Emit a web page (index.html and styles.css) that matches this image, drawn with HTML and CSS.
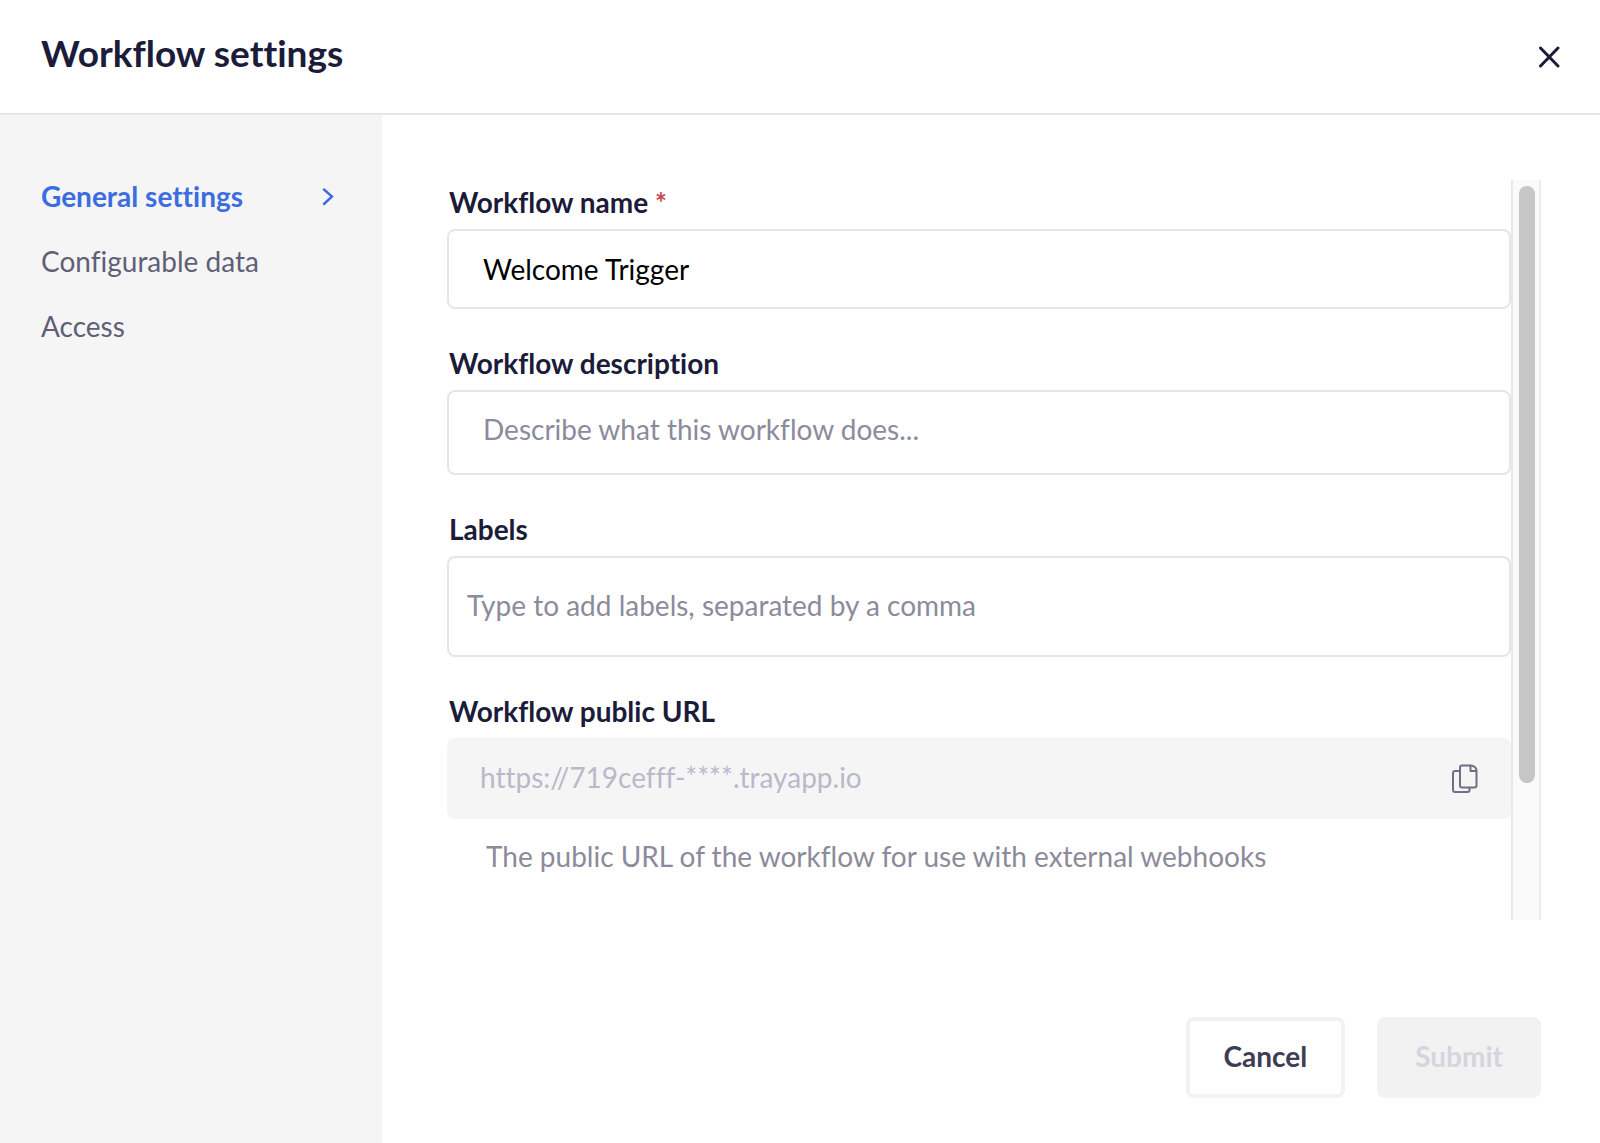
FILE: index.html
```html
<!DOCTYPE html>
<html lang="en">
<head>
  <meta charset="UTF-8" />
  <meta name="viewport" content="width=device-width, initial-scale=1.0" />
  <title>Workflow settings</title>
  <link rel="stylesheet" href="styles.css">
</head>
<body>

<div class="modal">
  <header class="header">
    <h1 class="title">Workflow settings</h1>
    <button class="close" type="button" aria-label="Close">
      <svg width="22" height="22" viewBox="0 0 22 22" fill="none" stroke="currentColor" stroke-width="3" stroke-linecap="round">
        <path d="M2.500 2l17.500 18M20 2L2.500 20" />
      </svg>
    </button>
  </header>

  <div class="content">
    <nav class="sidebar">
      <a class="nav-link active" href="#general">
        General settings
        <svg width="12" height="18" viewBox="0 0 12 18" fill="none" stroke="currentColor" stroke-width="2.400" stroke-linecap="round">
          <path d="M2 1.500l8 7-8 7.500" />
        </svg>
      </a>
      <a class="nav-link" href="#data">Configurable data</a>
      <a class="nav-link" href="#access">Access</a>
    </nav>

    <form class="panel">
      <div class="scroll-area">
        <div class="fields">
          <div class="field">
            <label for="name">Workflow name <span class="required">*</span></label>
            <input class="control" id="name" type="text" value="Welcome Trigger" />
          </div>
          <div class="field">
            <label for="description">Workflow description</label>
            <textarea class="control description" id="description" rows="1" placeholder="Describe what this workflow does..."></textarea>
          </div>
          <div class="field">
            <label for="labels">Labels</label>
            <input class="control labels" id="labels" type="text" placeholder="Type to add labels, separated by a comma" />
          </div>
          <div class="field">
            <label for="url">Workflow public URL</label>
            <div class="url-box">
              <input class="url" id="url" type="text" value="https://719cefff-****.trayapp.io" disabled />
              <button class="copy" type="button" aria-label="Copy URL">
                <svg width="26" height="30" viewBox="0 0 26 30" fill="none" stroke="currentColor" stroke-width="2" stroke-linejoin="round">
                  <path d="M8 7H3Q1 7 1 9V26Q1 28 3 28H15.500Q17.500 28 17.500 26V23.500" />
                  <path d="M10 1.500H19Q24.500 2.500 24.500 7V21.500Q24.500 23.500 22.500 23.500H10Q8 23.500 8 21.500V3.500Q8 1.500 10 1.500Z" />
                  <path d="M18.500 1.500V7H24.500" />
                </svg>
              </button>
            </div>
            <p class="help">The public URL of the workflow for use with external webhooks</p>
          </div>
        </div>
        <div class="scrollbar">
          <div class="thumb"></div>
        </div>
      </div>

      <div class="actions">
        <button class="button cancel" type="button">Cancel</button>
        <button class="button submit" type="submit" disabled>Submit</button>
      </div>
    </form>
  </div>
</div>

</body>
</html>
```
FILE: styles.css
```css
* {
  box-sizing: border-box;
}

body {
  margin: 0;
  font-family: Lato, sans-serif;
  font-size: 28px;
  font-variant-ligatures: none;
  color: #1b1b3a;
  background-color: #fff;
}

button,
input,
textarea {
  font: inherit;
  font-variant-ligatures: none;
}

.modal {
  display: flex;
  flex-direction: column;
  min-height: 100vh;
}

.header {
  display: flex;
  justify-content: space-between;
  align-items: center;
  padding: 28px 36px 36px 41px;
  border-bottom: 2px solid #e5e6ea;
}

.title {
  margin: 0;
  font-size: 37px;
  line-height: 49px;
  font-weight: 700;
}

.close {
  display: flex;
  padding: 4px;
  margin-top: 8px;
  border: none;
  background: none;
  color: inherit;
  cursor: pointer;
}

.content {
  display: flex;
  flex: 1;
}

.sidebar {
  flex: none;
  width: 382px;
  padding: 49px 48px 0 41px;
  background-color: #f5f5f5;
}

.nav-link {
  display: flex;
  justify-content: space-between;
  align-items: center;
  line-height: 65px;
  color: #5f5f75;
  text-decoration: none;
}

.nav-link.active {
  color: #3b6de0;
  font-weight: 700;
}

.panel {
  display: flex;
  flex-direction: column;
  flex: 1;
  padding: 65px 59px 45px 65px;
}

.scroll-area {
  display: flex;
  flex: 1;
  margin-bottom: 97px;
}

.fields {
  display: flex;
  flex-direction: column;
  flex: 1;
  gap: 32px;
}

.field {
  display: flex;
  flex-direction: column;
}

.field label {
  padding-left: 2px;
  margin-bottom: 5px;
  line-height: 44px;
  font-weight: 700;
}

.required {
  color: #c94a4a;
}

.control {
  display: block;
  width: 100%;
  height: 80px;
  padding: 0 34px;
  border: 2px solid #e5e6ea;
  border-radius: 8px;
  background-color: #fff;
  color: #000;
}

.control::placeholder {
  color: #8b8b9b;
  opacity: 1;
}

.description {
  height: 85px;
  padding-top: 17px;
  line-height: 40px;
  resize: none;
}

.labels {
  height: 101px;
  padding: 0 18px 4px;
}

.url-box {
  display: flex;
  align-items: center;
  height: 81px;
  padding: 0 33px;
  border-radius: 8px;
  background-color: #f5f5f5;
}

.url {
  flex: 1;
  padding: 0 0 4px;
  border: none;
  background: none;
  color: #b9b9c9;
}

.copy {
  display: flex;
  padding: 0;
  border: none;
  background: none;
  color: #6f6f87;
  cursor: pointer;
}

.help {
  margin: 15px 0 0;
  padding-left: 39px;
  line-height: 44px;
  color: #8b8b9b;
}

.scrollbar {
  width: 30px;
  padding: 6px;
  border-left: 2px solid #e8e8e8;
  border-right: 2px solid #ededed;
  background-color: #fafafa;
}

.thumb {
  width: 16px;
  height: 82%;
  border-radius: 8px;
  background-color: #c6c6c6;
}

.actions {
  display: flex;
  justify-content: flex-end;
  gap: 32px;
}

.button {
  height: 81px;
  padding: 0 34px 4px;
  border: 4px solid #f2f2f2;
  border-radius: 8px;
  font-weight: 700;
  cursor: pointer;
}

.cancel {
  background-color: #fff;
  color: #3d3d56;
}

.submit {
  background-color: #f2f2f2;
  color: #d5d5de;
  cursor: default;
}
```
